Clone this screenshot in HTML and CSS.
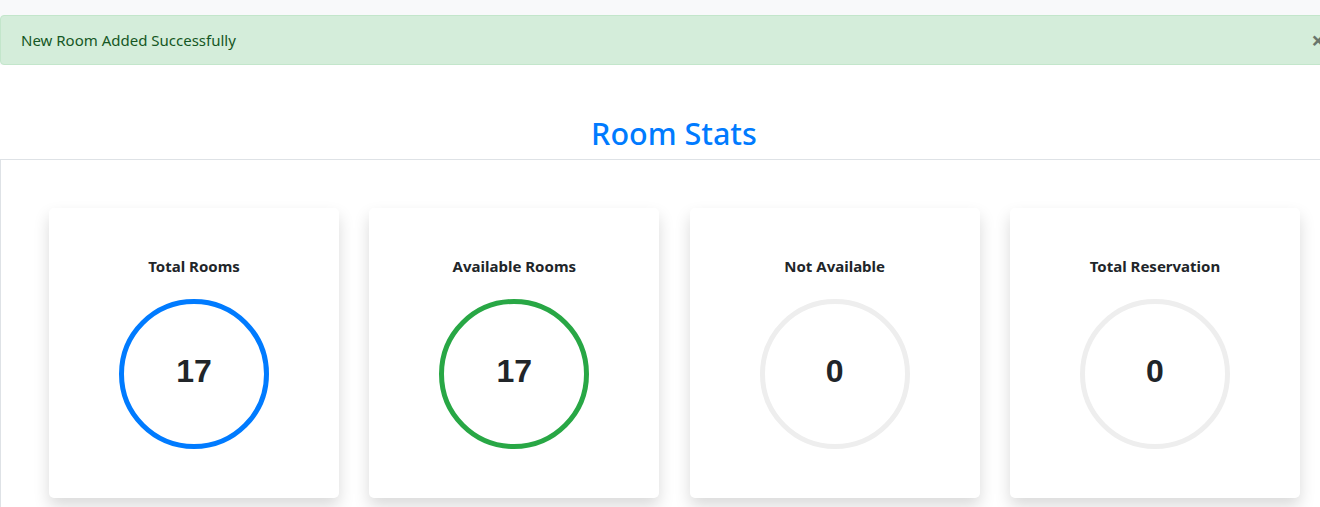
FILE: index.html
```html
<!DOCTYPE html>
<html>
<head>
<meta charset="utf-8">
<link rel="stylesheet" href="styles.css">
</head>
<body>
<div class="page">
  <div class="topband">
    <div class="alert">
      <span class="alert-text">New Room Added Successfully</span>
      <span class="close">&times;</span>
    </div>
  </div>
  <h2 class="title">Room Stats</h2>
  <div class="stats">
    <div class="card">
      <div class="card-title">Total Rooms</div>
      <div class="ring ring-blue"><span>17</span></div>
    </div>
    <div class="card">
      <div class="card-title">Available Rooms</div>
      <div class="ring ring-green"><span>17</span></div>
    </div>
    <div class="card">
      <div class="card-title">Not Available</div>
      <div class="ring ring-gray"><span>0</span></div>
    </div>
    <div class="card">
      <div class="card-title">Total Reservation</div>
      <div class="ring ring-gray"><span>0</span></div>
    </div>
  </div>
</div>
</body>
</html>
```

FILE: styles.css
```css
html, body {
  margin: 0;
  padding: 0;
  overflow: hidden;
  background: #fff;
}
body {
  font-family: "Noto Sans", "Open Sans", "DejaVu Sans", sans-serif;
  color: #212529;
}
.page {
  width: 1348px;
}
.topband {
  background: #f8f9fa;
  padding-top: 15px;
}
.alert {
  display: flex;
  justify-content: space-between;
  align-items: center;
  height: 48px;
  padding: 0 20px;
  background: #d4edda;
  border: 1px solid #c3e6cb;
  border-radius: 4px;
  color: #155724;
  font-size: 15px;
}
.alert-text {
  line-height: 24px;
}
.close {
  font-size: 24px;
  font-weight: 700;
  color: #000;
  opacity: 0.5;
  line-height: 24px;
  margin-right: 2px;
}
.title {
  margin: 49px 0 7px;
  text-align: center;
  color: #007bff;
  font-size: 30.5px;
  font-weight: 500;
  line-height: 38px;
}
.stats {
  border-top: 1px solid #dee2e6;
  border-left: 1px solid #dee2e6;
  padding: 48px 0 40px 48px;
  display: flex;
  gap: 30.33px;
}
.card {
  width: 290px;
  height: 290px;
  flex-shrink: 0;
  box-sizing: border-box;
  background: #fff;
  border-radius: 5px;
  box-shadow: 0 8px 16px rgba(0, 0, 0, 0.15);
  display: flex;
  flex-direction: column;
  align-items: center;
  padding-top: 48px;
}
.card-title {
  font-size: 15px;
  font-weight: 700;
  line-height: 21px;
}
.ring {
  margin-top: 22px;
  width: 150px;
  height: 150px;
  box-sizing: border-box;
  border: 5px solid #eee;
  border-radius: 50%;
  display: flex;
  align-items: center;
  justify-content: center;
}
.ring span {
  font-family: "Liberation Sans", Arial, sans-serif;
  font-size: 32px;
  font-weight: 700;
  margin-top: -5px;
}
.ring-blue { border-color: #007bff; }
.ring-green { border-color: #28a745; }
.ring-gray { border-color: #eeeeee; }
```
